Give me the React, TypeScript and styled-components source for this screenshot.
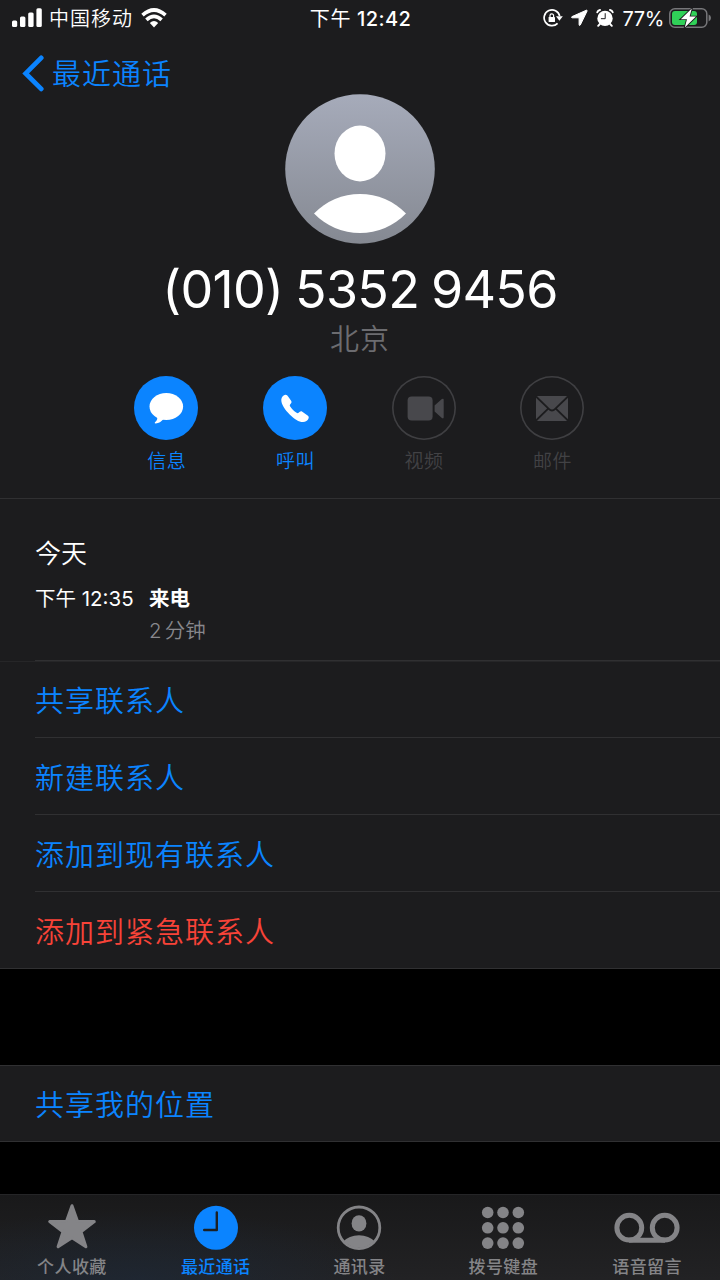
import React from "react";
import styled, { createGlobalStyle } from "styled-components";

const BLUE = "#0b84ff";
const LINE = "#303032";

const Global = createGlobalStyle`
  * { box-sizing: border-box; }
  body { margin: 0; background: #000; }
`;

const Screen = styled.div`
  width: 720px;
  height: 1280px;
  display: flex;
  flex-direction: column;
  overflow: hidden;
  background: #000;
  color: #fff;
  font-family: Inter, "Noto Sans CJK SC", sans-serif;
  white-space: nowrap;
  svg { display: block; flex: none; }
`;

const Header = styled.header`
  height: 499px;
  flex: none;
  display: flex;
  flex-direction: column;
  align-items: center;
  background: #1c1c1e;
  border-bottom: 1px solid ${LINE};
`;

const StatusBar = styled.div`
  width: 100%;
  height: 38px;
  flex: none;
  display: grid;
  grid-template-columns: 1fr auto 1fr;
  align-items: center;
  padding: 0 9px 2px 12px;
  font-size: 20px;
  line-height: 28px;
`;

const StatusGroup = styled.div<{ $end?: boolean }>`
  display: flex;
  align-items: center;
  justify-content: ${(p) => (p.$end ? "flex-end" : "flex-start")};
`;

const Carrier = styled.span`
  margin: 2px 8px 0 7px;
  letter-spacing: 1px;
  font-weight: 350;
`;

const Clock = styled.span`
  margin: 1px 2px 0 0;
  letter-spacing: 0.8px;
  word-spacing: -0.8px;
`;

const ClockTime = styled.span`
  font-weight: 500;
  letter-spacing: 0.4px;
`;

const Battery = styled.span`
  margin: 1px 5px 0 8px;
  letter-spacing: -0.35px;
`;

const NavBar = styled.nav`
  width: 100%;
  height: 56px;
  flex: none;
  padding: 16px 0 0 22px;
`;

const BackButton = styled.div`
  display: flex;
  align-items: center;
  gap: 8px;
  height: 39px;
  color: ${BLUE};
  font-size: 29px;
  font-weight: 350;
  letter-spacing: 1px;
  line-height: 36px;
`;

const BackLabel = styled.span`
  margin-top: 2px;
`;

const PhoneNumber = styled.h1`
  margin: 15px 0 0;
  font-size: 52px;
  line-height: 62px;
  font-weight: 400;
  letter-spacing: -0.72px;
  word-spacing: -2.2px;
`;

const Place = styled.div`
  font-size: 29px;
  line-height: 38px;
  letter-spacing: 1px;
  font-weight: 350;
  color: #6c6c70;
`;

const Actions = styled.div`
  display: flex;
  gap: 64.6px;
  margin: 16.6px 1.6px 0 0;
`;

const Action = styled.div<{ $off?: boolean }>`
  width: 64px;
  display: flex;
  flex-direction: column;
  align-items: center;
  gap: 7.9px;
  color: ${(p) => (p.$off ? "#424245" : BLUE)};
  font-size: 19px;
  font-weight: 350;
  line-height: 30px;
  letter-spacing: 0.5px;
`;

const ActionLabel = styled.span`
  margin-left: 1px;
`;

const ActionCircle = styled.div<{ $off?: boolean }>`
  width: 64px;
  height: 64px;
  border-radius: 50%;
  background: ${(p) => (p.$off ? "transparent" : BLUE)};
  box-shadow: ${(p) => (p.$off ? "inset 0 0 0 1.6px #3f3f42" : "none")};
`;

const History = styled.section`
  height: 163px;
  flex: none;
  padding: 37px 0 0 35px;
  background: #1c1c1e;
  border-bottom: 1px solid #262628;
  display: flex;
  flex-direction: column;
`;

const Day = styled.h2`
  margin: 0;
  font-size: 26px;
  line-height: 36px;
  font-weight: 350;
`;

const CallRow = styled.div`
  display: grid;
  grid-template-columns: 114px 1fr;
  grid-template-rows: 32px 32px;
  margin-top: 11px;
  flex: 1;
  font-size: 20.5px;
  line-height: 32px;
  border-bottom: 1px solid ${LINE};
`;

const CallTime = styled.span`
  font-weight: 400;
`;

const CallKind = styled.span`
  font-weight: 600;
`;

const Duration = styled.span`
  grid-column: 2;
  color: #88888d;
  font-weight: 350;
  word-spacing: -2.5px;
`;

const List = styled.section<{ $boxed?: boolean }>`
  flex: none;
  background: #1c1c1e;
  padding-left: 35px;
  border-top: ${(p) => (p.$boxed ? `1px solid ${LINE}` : "none")};
  border-bottom: 1px solid ${LINE};
`;

const ListItem = styled.div<{ $danger?: boolean }>`
  height: 77px;
  line-height: 82px;
  font-size: 29px;
  font-weight: 350;
  letter-spacing: 1px;
  color: ${(p) => (p.$danger ? "#f74338" : BLUE)};
  border-bottom: 1px solid ${LINE};
  &:last-child { height: 76px; border-bottom: none; }
  &:first-child { height: 76px; line-height: 80px; }
  &:only-child { height: 75px; }
`;

const Gap = styled.div<{ $h: number }>`
  height: ${(p) => p.$h}px;
  flex: none;
`;

const TabBar = styled.footer`
  height: 86px;
  flex: none;
  display: grid;
  grid-template-columns: repeat(5, 1fr);
  padding-right: 1px;
  background:
    radial-gradient(ellipse 260px 70px at 140px 100%, rgba(28, 42, 60, 0.55), transparent),
    linear-gradient(#19191a, #222224);
  border-top: 1px solid #252527;
`;

const Tab = styled.div<{ $active?: boolean }>`
  display: flex;
  flex-direction: column;
  align-items: center;
  padding-top: 8px;
  gap: 2px;
  color: ${(p) => (p.$active ? BLUE : "#848487")};
  font-size: 17px;
  font-weight: 500;
  line-height: 24px;
  letter-spacing: 0.4px;
`;

const Signal = () => (
  <svg width="30" height="20" fill="#fff">
    <rect x="0" y="12.5" width="5.2" height="6.5" rx="1.5" />
    <rect x="8" y="8.5" width="5.4" height="10.5" rx="1.5" />
    <rect x="16.2" y="4.5" width="5.4" height="14.5" rx="1.5" />
    <rect x="24.4" y="0.3" width="5.4" height="18.7" rx="1.5" />
  </svg>
);

const Wifi = () => (
  <svg width="26" height="20" viewBox="0 0 26 20" fill="none" stroke="#fff" strokeWidth="3.6">
    <path d="M1.5 7.2Q13-3.2 24.5 7.2" />
    <path d="M5.4 11.9Q13 4.9 20.6 11.9" />
    <path d="M8.8 15Q13 11.2 17.2 15L13 19.4Z" fill="#fff" stroke="none" />
  </svg>
);

const RotationLock = () => (
  <svg width="20" height="20" viewBox="0 0 20 20" fill="none" stroke="#fff">
    <path d="M14.6 15.4A7.9 7.9 0 1 1 16.7 8" strokeWidth="1.7" />
    <path d="M13 8.2H19.8L16.4 12.8Z" fill="#fff" stroke="none" />
    <rect x="5.6" y="8.9" width="6.4" height="5.2" rx="0.7" fill="#fff" stroke="none" />
    <path d="M7 9.2V7.6a1.8 1.8 0 0 1 3.6 0V9.2" strokeWidth="1.2" />
  </svg>
);

const Location = () => (
  <svg width="17" height="18" viewBox="0 0 17 18" fill="#fff" stroke="#fff" strokeWidth="1" strokeLinejoin="round">
    <path d="M15.4 1.2 1 7.6C.3 8 .5 8.7 1.2 8.8H8.1V15.6C8.1 16.6 8.9 16.7 9.3 16L16.1 2Q16.3 1 15.4 1.2Z" />
  </svg>
);

const Alarm = () => (
  <svg width="18" height="20" viewBox="0 0 18 20" fill="none" stroke="#fff" strokeLinecap="round">
    <circle cx="9" cy="10.4" r="7.7" fill="#fff" stroke="none" />
    <path d="M1.3 4.2Q1.9 2.3 4 1.9M16.7 4.2Q16.1 2.3 14 1.9" strokeWidth="2" />
    <path d="M4 15.8 2.2 17.8M14 15.8 15.8 17.8" strokeWidth="2" />
    <path d="M9.2 5.6V10.7H5.3" stroke="#1c1c1e" strokeWidth="1" />
  </svg>
);

const BatteryIcon = () => (
  <svg width="42" height="22" viewBox="0 0 42 22">
    <rect x="0.8" y="1.8" width="37" height="18.4" rx="5" fill="none" stroke="#77777a" strokeWidth="1.5" />
    <path d="M39.6 7.6Q42 8.6 42 11T39.6 14.4Z" fill="#77777a" />
    <rect x="3" y="4" width="25" height="14" rx="3" fill="#30d158" />
    <path d="M22.8 1.6 11.8 12.2H18L15.8 20.4 27 9.6H20.6Z" fill="#fff" stroke="#1c1c1e" strokeWidth="1.8" paintOrder="stroke" />
  </svg>
);

const Chevron = () => (
  <svg width="22" height="39" viewBox="0 0 22 39" fill="none" stroke={BLUE} strokeWidth="4.8" strokeLinecap="round" strokeLinejoin="miter">
    <path d="M19.2 3.9 3.7 19.4 19.2 34.9" />
  </svg>
);

const Avatar = () => (
  <svg width="150" height="150" viewBox="0 0 150 150">
    <defs>
      <linearGradient id="avatar" x1="0" y1="0" x2="0" y2="1">
        <stop offset="0" stopColor="#a6abba" />
        <stop offset="1" stopColor="#858992" />
      </linearGradient>
    </defs>
    <circle cx="75" cy="75" r="74.8" fill="url(#avatar)" />
    <ellipse cx="75" cy="59.5" rx="25.5" ry="28" fill="#fff" />
    <path d="M29 119.5A64 64 0 0 1 121 119.5A64 64 0 0 1 29 119.5Z" fill="#fff" />
  </svg>
);

const MessageIcon = () => (
  <svg width="64" height="64" viewBox="0 0 64 64" fill="#fff">
    <ellipse cx="32.3" cy="30.5" rx="16.8" ry="13.5" />
    <path d="M22.8 40C24 43 23 44.6 20.9 46.2Q20.2 47.6 21.8 47.6Q26.2 47 29.5 43Z" />
  </svg>
);

const PhoneIcon = () => (
  <svg width="64" height="64" viewBox="0 0 64 64" fill="#fff">
    <path d="M18.3 23.5C18.5 21 20.5 19 22.4 18.8C23.6 18.7 24.5 19.6 25.3 20.8L28.1 24.8C29.1 26.2 28.3 27.2 27.1 28.4C26.6 29 26.8 29.7 27.2 30.4C28.8 33 31 35.2 33.6 36.8C34.3 37.2 35 37.3 35.6 36.8C36.8 35.4 38 34.9 39.3 35.8L43.9 38.9C45.5 40 46.2 40.9 45.5 42.5C44.7 44.6 42.6 46 40 46.1C36 46.2 31.5 43.2 26.9 38.7C22 33.8 18 28.2 18.3 23.5Z" />
  </svg>
);

const VideoIcon = () => (
  <svg width="64" height="64" viewBox="0 0 64 64" fill="#48484c">
    <rect x="15.6" y="20.6" width="25" height="24" rx="4" />
    <path d="M42.6 29.6 49.9 23.1Q51.7 21.9 51.7 24V41Q51.7 43.2 49.9 42L42.6 35.6Z" />
  </svg>
);

const MailIcon = () => (
  <svg width="64" height="64" viewBox="0 0 64 64">
    <rect x="16" y="20" width="32" height="25" rx="2" fill="#48484c" />
    <path d="M16 20.5 28.8 32.8Q32 36.2 35.2 32.8L48 20.5M16 44.5 28.2 32.6M48 44.5 35.8 32.6" fill="none" stroke="#1c1c1e" strokeWidth="1.8" />
  </svg>
);

const StarIcon = () => (
  <svg width="50" height="50" viewBox="0 0 50 50" fill="currentColor" stroke="currentColor" strokeWidth="3" strokeLinejoin="round">
    <path d="M25 2.7 30.5 18.2 47.3 18.6 34 28.7 38.9 43.8 25 34.8 11.1 43.8 16 28.7 2.7 18.6 19.5 18.2Z" />
  </svg>
);

const RecentsIcon = () => (
  <svg width="50" height="50" viewBox="0 0 50 50">
    <circle cx="25" cy="24.8" r="22" fill="currentColor" />
    <path d="M25.8 9.5V27H13.2" fill="none" stroke="#1c2024" strokeWidth="2.4" strokeLinejoin="round" strokeLinecap="round" />
  </svg>
);

const ContactIcon = () => (
  <svg width="50" height="50" viewBox="0 0 50 50" fill="currentColor">
    <defs>
      <clipPath id="contact"><circle cx="25" cy="24.8" r="20" /></clipPath>
    </defs>
    <circle cx="25" cy="24.8" r="20.8" fill="none" stroke="currentColor" strokeWidth="2.8" />
    <ellipse cx="25" cy="20.4" rx="7.4" ry="8.2" />
    <path clipPath="url(#contact)" d="M9 38.8Q15 32.2 25 32.2T41 38.8L34 46H16Z" />
  </svg>
);

const KeypadIcon = () => (
  <svg width="50" height="50" viewBox="0 0 50 50" fill="currentColor">
    {[9.5, 24.8, 40.1].map((y) =>
      [9.7, 25, 40.3].map((x) => <circle key={`${x}-${y}`} cx={x} cy={y} r="5.8" />)
    )}
  </svg>
);

const VoicemailIcon = () => (
  <svg width="66" height="50" viewBox="0 0 66 50" fill="none" stroke="currentColor" strokeWidth="5">
    <circle cx="15.3" cy="24.7" r="12.4" />
    <circle cx="50.7" cy="24.7" r="12.4" />
    <path d="M15 37.2H51" />
  </svg>
);

const actions = [
  { label: "信息", icon: <MessageIcon /> },
  { label: "呼叫", icon: <PhoneIcon /> },
  { label: "视频", icon: <VideoIcon />, off: true },
  { label: "邮件", icon: <MailIcon />, off: true },
];

const tabs = [
  { label: "个人收藏", icon: <StarIcon /> },
  { label: "最近通话", icon: <RecentsIcon />, active: true },
  { label: "通讯录", icon: <ContactIcon /> },
  { label: "拨号键盘", icon: <KeypadIcon /> },
  { label: "语音留言", icon: <VoicemailIcon /> },
];

const RotationSlot = styled.span`
  margin-right: 8px;
`;
const LocationSlot = styled.span`
  margin-right: 8px;
`;

export default function App() {
  return (
    <Screen>
      <Global />
      <Header>
        <StatusBar>
          <StatusGroup>
            <Signal />
            <Carrier>中国移动</Carrier>
            <Wifi />
          </StatusGroup>
          <Clock>下午 <ClockTime>12:42</ClockTime></Clock>
          <StatusGroup $end>
            <RotationSlot><RotationLock /></RotationSlot>
            <LocationSlot><Location /></LocationSlot>
            <Alarm />
            <Battery>77%</Battery>
            <BatteryIcon />
          </StatusGroup>
        </StatusBar>
        <NavBar>
          <BackButton>
            <Chevron />
            <BackLabel>最近通话</BackLabel>
          </BackButton>
        </NavBar>
        <Avatar />
        <PhoneNumber>(010) 5352 9456</PhoneNumber>
        <Place>北京</Place>
        <Actions>
          {actions.map((a) => (
            <Action key={a.label} $off={a.off}>
              <ActionCircle $off={a.off}>{a.icon}</ActionCircle>
              <ActionLabel>{a.label}</ActionLabel>
            </Action>
          ))}
        </Actions>
      </Header>
      <History>
        <Day>今天</Day>
        <CallRow>
          <CallTime>下午 12:35</CallTime>
          <CallKind>来电</CallKind>
          <Duration>2 分钟</Duration>
        </CallRow>
      </History>
      <List>
        <ListItem>共享联系人</ListItem>
        <ListItem>新建联系人</ListItem>
        <ListItem>添加到现有联系人</ListItem>
        <ListItem $danger>添加到紧急联系人</ListItem>
      </List>
      <Gap $h={96} />
      <List $boxed>
        <ListItem>共享我的位置</ListItem>
      </List>
      <Gap $h={52} />
      <TabBar>
        {tabs.map((t) => (
          <Tab key={t.label} $active={t.active}>
            {t.icon}
            <span>{t.label}</span>
          </Tab>
        ))}
      </TabBar>
    </Screen>
  );
}
